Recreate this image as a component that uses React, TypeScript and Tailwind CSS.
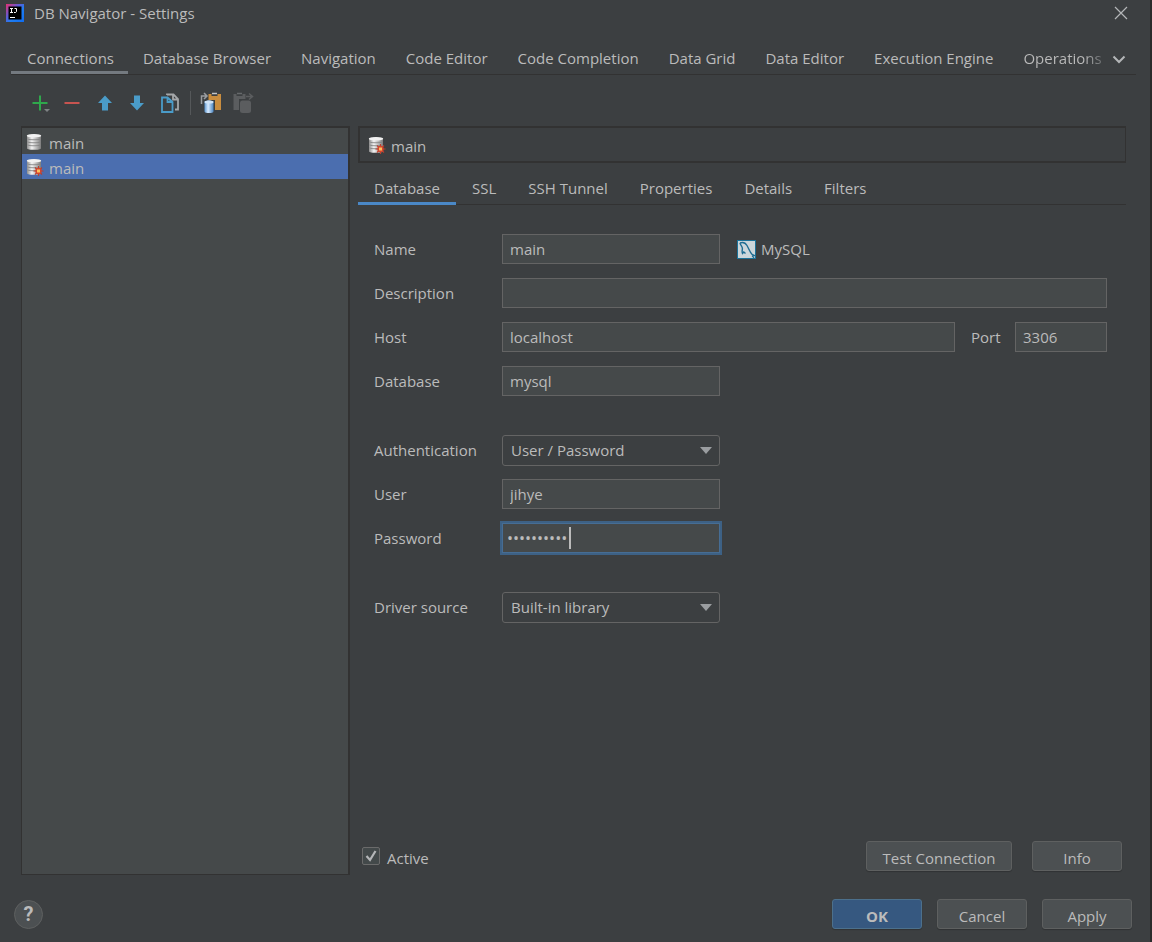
import { useId } from "react";
import type { ReactNode } from "react";

const mainTabs = [
  "Connections",
  "Database Browser",
  "Navigation",
  "Code Editor",
  "Code Completion",
  "Data Grid",
  "Data Editor",
  "Execution Engine",
  "Operations",
];

const detailTabs = ["Database", "SSL", "SSH Tunnel", "Properties", "Details", "Filters"];

function AppLogo() {
  return (
    <svg width="18" height="18" viewBox="0 0 18 18" aria-hidden="true">
      <defs>
        <linearGradient id="logo-edge" x1="0" y1="0" x2="1" y2="1">
          <stop offset="0" stopColor="#e8306f" />
          <stop offset="0.4" stopColor="#5a5fd8" />
          <stop offset="0.6" stopColor="#1f7df0" />
          <stop offset="1" stopColor="#0f6cf2" />
        </linearGradient>
      </defs>
      <rect width="18" height="18" fill="url(#logo-edge)" />
      <rect x="2.500" y="2.500" width="13" height="13" fill="#000" />
      <path
        d="M4 4.500h3M5.500 4.500v4M4 8.500h3M8.500 4.500h2v3l-.8 1H8M4 13.500h5"
        stroke="#fff"
        strokeWidth="1"
        fill="none"
      />
    </svg>
  );
}

function DatabaseIcon({ fresh = false }: { fresh?: boolean }) {
  return (
    <svg width="18" height="18" viewBox="0 0 18 18" aria-hidden="true">
      <defs>
        <linearGradient id="disk" x1="0" y1="0" x2="1" y2="0">
          <stop offset="0" stopColor="#8e8e8e" />
          <stop offset="0.35" stopColor="#f4f4f4" />
          <stop offset="1" stopColor="#7c7c7c" />
        </linearGradient>
      </defs>
      <path d="M1 2.500C1 1 15 1 15 2.500v13c0 1.800-14 1.800-14 0z" fill="url(#disk)" />
      <ellipse cx="8" cy="2.800" rx="7.200" ry="1.700" fill="#f2f2f2" />
      <path
        d="M1.500 6c2 1 11 1 13 0M1.500 9c2 1 11 1 13 0M1.500 12c2 1 11 1 13 0"
        stroke="#858585"
        strokeWidth="0.900"
        fill="none"
      />
      {fresh && (
        <g>
          <path
            d="M12.500 8v10M7.500 13h10M9 9.500l7 7M16 9.500l-7 7"
            stroke="#b8402f"
            strokeWidth="1.100"
            fill="none"
          />
          <circle cx="12.500" cy="13" r="3.200" fill="#d2452f" />
          <rect x="11" y="11.500" width="3" height="3" fill="#ffc05a" />
        </g>
      )}
    </svg>
  );
}

function MySqlIcon() {
  return (
    <svg width="19" height="19" viewBox="0 0 19 19" aria-hidden="true">
      <rect x="0.500" y="0.500" width="18" height="18" fill="#cbd6db" stroke="#1b7299" />
      <path
        d="M3 3c2.500-1 5.500 0 7 2.500 1.800 3 2.800 6.500 5 8.800l2.500 1.200-1.800.8 1.300 1.500M3 3c.2 1.800 1.800 2.800 2.300 4.800.4 2-.8 3.700.2 5.700l1.300-1.500 1.700 1.500"
        fill="none"
        stroke="#1f6d93"
        strokeWidth="1.400"
      />
    </svg>
  );
}

function ToolButton({ label, children }: { label: string; children: ReactNode }) {
  return (
    <button type="button" aria-label={label} className="flex h-6 w-8 items-center justify-center">
      <svg width="22" height="22" viewBox="0 0 22 22" fill="none" aria-hidden="true">
        {children}
      </svg>
    </button>
  );
}

function Toolbar() {
  return (
    <div className="flex items-center pl-[25px]">
      <ToolButton label="Add connection">
        <path d="M10 3.500v15M2.500 11h15" stroke="#2fa84c" strokeWidth="2" />
        <path d="M14 17h6l-3 3z" fill="#7f8385" />
      </ToolButton>
      <ToolButton label="Remove connection">
        <path d="M2.500 11h15" stroke="#c75450" strokeWidth="2" />
      </ToolButton>
      <ToolButton label="Move up">
        <path d="M11 3.500l7 7.500h-4v7.500H8V11H4z" fill="#4a9cc9" />
      </ToolButton>
      <ToolButton label="Move down">
        <path d="M11 18.500l7-7.500h-4V3.500H8V11H4z" fill="#4a9cc9" />
      </ToolButton>
      <ToolButton label="Duplicate">
        <path d="M9 3V2.500h6.500l4.500 4.500V17.500H17M15 2.500v5h5" stroke="#a4a7a9" strokeWidth="1.800" />
        <path d="M4 5.500h5.500L14.500 10v10H4zM9.500 5.500V10h5" stroke="#4a9cc9" strokeWidth="1.800" />
      </ToolButton>
      <span className="mr-1 ml-[5px] h-6 w-px bg-[#55585a]" />
      <ToolButton label="Import from clipboard">
        <defs>
          <linearGradient id="cylinder" x1="0" y1="0" x2="1" y2="0">
            <stop offset="0" stopColor="#5d97d0" />
            <stop offset="0.4" stopColor="#d8ebff" />
            <stop offset="1" stopColor="#4b86c2" />
          </linearGradient>
        </defs>
        <path d="M8.500 2h3v2h6V2h3.500v16h-6V8h-6.500z" fill="#c98d3f" />
        <path d="M12 1.500h5" stroke="#c4c6c8" strokeWidth="1.500" />
        <path d="M1.500 12V4h5M4 1l3 3-3 3" stroke="#9a9da0" strokeWidth="1.500" />
        <path d="M4.500 10c0-2 9-2 9 0v9.500c0 2-9 2-9 0z" fill="url(#cylinder)" />
        <ellipse cx="9" cy="10" rx="4.500" ry="1.500" fill="#cfe3f7" />
      </ToolButton>
      <ToolButton label="Paste">
        <path d="M1.500 2h3v2h6V2h3v5H7v11H1.500z" fill="#5b5d5f" />
        <path d="M5 1.500h5" stroke="#66696b" strokeWidth="1.500" />
        <path d="M14 4.500h6M17 1.500l3.500 3-3.500 3" stroke="#5b5d5f" strokeWidth="1.500" />
        <rect x="8" y="8.500" width="11" height="12.500" rx="2.500" fill="#5b5d5f" />
      </ToolButton>
    </div>
  );
}

const fieldClass =
  "h-[30px] min-w-0 border border-[#646464] bg-[#45494a] px-[7px] text-[15px] text-[#bbbbbb] outline-none";

function Row({ label, children }: { label: string; children: (id: string) => ReactNode }) {
  const id = useId();
  return (
    <div className="flex h-[30px] items-center">
      <label htmlFor={id} className="w-32 shrink-0">
        {label}
      </label>
      {children(id)}
    </div>
  );
}

function Dropdown({ id, value }: { id: string; value: string }) {
  return (
    <div className="relative w-[218px]">
      <select
        id={id}
        defaultValue={value}
        className="h-[31px] w-full appearance-none rounded-[3px] border border-[#646464] bg-[#3c3f41] px-2 text-[15px] text-[#bbbbbb] outline-none"
      >
        <option>{value}</option>
      </select>
      <svg
        width="12"
        height="7"
        viewBox="0 0 12 7"
        className="pointer-events-none absolute top-3 right-2"
        aria-hidden="true"
      >
        <path d="M0 0h12L6 7z" fill="#9a9da0" />
      </svg>
    </div>
  );
}

function PushButton({
  children,
  wide = false,
  primary = false,
}: {
  children: ReactNode;
  wide?: boolean;
  primary?: boolean;
}) {
  return (
    <button
      type="button"
      className={`h-[30px] rounded-[3px] border pt-[3px] leading-[24px] shadow-[0_1px_1px_rgba(0,0,0,0.2)] ${
        wide ? "w-[146px]" : "w-[90px]"
      } ${primary ? "border-[#4c708c] bg-[#365880] font-bold" : "border-[#5e6060] bg-[#4c5052]"}`}
    >
      {children}
    </button>
  );
}

export default function App() {
  return (
    <div className="flex min-h-screen flex-col border-r-2 border-[#2b2b2b] bg-[#3c3f41] font-['Open_Sans','Noto_Sans',sans-serif] text-[15px] leading-[20px] text-[#bbbbbb]">
      <header className="flex h-[26px] items-center pr-[22px] pl-[6px]">
        <AppLogo />
        <h1 className="ml-[10px] flex-1">DB Navigator - Settings</h1>
        <button type="button" aria-label="Close">
          <svg width="14" height="14" viewBox="0 0 14 14" aria-hidden="true">
            <path d="M1 1l12 12M13 1L1 13" stroke="#b4b6b8" strokeWidth="1.200" />
          </svg>
        </button>
      </header>

      <nav className="mt-[18px] mr-[14px] ml-[11px] flex h-[31px] items-stretch">
        <div className="flex min-w-0 flex-1 border-b border-[#323232]" role="tablist">
          {mainTabs.map((tab, i) => (
            <button
              key={tab}
              type="button"
              role="tab"
              aria-selected={i === 0}
              className={`shrink-0 border-b-[3px] whitespace-nowrap ${
                i === 0 ? "border-[#747a80] pr-[14px] pl-4" : "border-transparent"
              } ${
                i === mainTabs.length - 1
                  ? "bg-linear-to-r from-[#bbbbbb] from-80% to-[#6a6d6f] bg-clip-text pl-[15px] text-transparent"
                  : i > 0
                    ? "px-[15px]"
                    : ""
              }`}
            >
              {tab}
            </button>
          ))}
        </div>
        <button
          type="button"
          aria-label="More tabs"
          className="flex w-[33px] items-center border-b border-[#323232] pl-[9px]"
        >
          <svg width="14" height="9" viewBox="0 0 14 9" fill="none" aria-hidden="true">
            <path d="M1.500 1.500L7 7l5.500-5.500" stroke="#b4b6b8" strokeWidth="2" />
          </svg>
        </button>
      </nav>

      <div className="mt-4">
        <Toolbar />
      </div>

      <main className="mt-[11px] mr-[24px] ml-[21px] flex flex-1 gap-2">
        <ul className="w-[329px] shrink-0 border border-t-2 border-r-2 border-[#323232] bg-[#45494a] pt-px">
          <li className="flex h-[25px] items-center gap-[5px] pl-1">
            <DatabaseIcon />
            <span className="pt-[2px]">main</span>
          </li>
          <li className="flex h-[25px] items-center gap-[5px] bg-[#4b6eaf] pl-1">
            <DatabaseIcon fresh />
            <span className="pt-[2px]">main</span>
          </li>
        </ul>

        <section className="flex min-w-0 flex-1 flex-col">
          <div className="flex h-[37px] items-center gap-[5px] border-2 border-r border-[#323232] pl-2">
            <DatabaseIcon fresh />
            <h2 className="pt-[2px]">main</h2>
          </div>

          <div className="mt-[9px] flex h-[33px] border-b border-[#323232]" role="tablist">
            {detailTabs.map((tab, i) => (
              <button
                key={tab}
                type="button"
                role="tab"
                aria-selected={i === 0}
                className={`-mb-px border-b-[3px] px-4 pt-px whitespace-nowrap ${
                  i === 0 ? "border-[#4a88c7]" : "border-transparent"
                }`}
              >
                {tab}
              </button>
            ))}
          </div>

          <form className="mt-[29px] flex flex-col gap-[39px] pr-[19px] pl-4">
            <div className="flex flex-col gap-[14px]">
              <Row label="Name">
                {(id) => (
                  <>
                    <input id={id} defaultValue="main" className={`${fieldClass} w-[218px]`} />
                    <span className="ml-[17px] flex items-center gap-[5px]">
                      <MySqlIcon />
                      MySQL
                    </span>
                  </>
                )}
              </Row>
              <Row label="Description">{(id) => <input id={id} className={`${fieldClass} flex-1`} />}</Row>
              <Row label="Host">
                {(id) => (
                  <>
                    <input id={id} defaultValue="localhost" className={`${fieldClass} flex-1`} />
                    <label htmlFor="port" className="w-[60px] pl-4">
                      Port
                    </label>
                    <input id="port" defaultValue="3306" className={`${fieldClass} w-[92px]`} />
                  </>
                )}
              </Row>
              <Row label="Database">
                {(id) => <input id={id} defaultValue="mysql" className={`${fieldClass} w-[218px]`} />}
              </Row>
            </div>

            <div className="flex flex-col gap-[14px]">
              <Row label="Authentication">{(id) => <Dropdown id={id} value="User / Password" />}</Row>
              <Row label="User">
                {(id) => <input id={id} defaultValue="jihye" className={`${fieldClass} w-[218px]`} />}
              </Row>
              <Row label="Password">
                {(id) => (
                  <div className="relative w-[218px]">
                    <input
                      id={id}
                      type="password"
                      defaultValue="abcdefghij"
                      className="h-[30px] w-full border border-[#466d94] bg-[#45494a] px-1 text-[16px] text-[#bbbbbb] ring-2 ring-[#3d6185] outline-none"
                    />
                    <span className="pointer-events-none absolute top-1 left-[67px] h-[22px] w-0.5 bg-[#bbbbbb]" />
                  </div>
                )}
              </Row>
            </div>

            <Row label="Driver source">{(id) => <Dropdown id={id} value="Built-in library" />}</Row>
          </form>

          <div className="mt-auto mr-1 mb-1 flex items-center gap-5 pl-1">
            <label className="mr-auto flex items-center gap-[7px]">
              <span className="relative flex">
                <input
                  type="checkbox"
                  defaultChecked
                  className="h-[18px] w-[18px] appearance-none rounded-[2px] border border-[#6b6b6b] bg-[#43494a]"
                />
                <svg
                  width="18"
                  height="18"
                  viewBox="0 0 18 18"
                  fill="none"
                  className="pointer-events-none absolute inset-0"
                  aria-hidden="true"
                >
                  <path d="M4.500 9l3.500 4 5.500-9" stroke="#b4b6b8" strokeWidth="2.200" />
                </svg>
              </span>
              <span className="pt-1">Active</span>
            </label>
            <PushButton wide>Test Connection</PushButton>
            <PushButton>Info</PushButton>
          </div>
        </section>
      </main>

      <footer className="mt-6 mr-[18px] mb-[13px] ml-[14px] flex items-center gap-[15px]">
        <button
          type="button"
          aria-label="Help"
          className="mr-auto h-[29px] w-[29px] rounded-full border border-[#5e6060] bg-[#4c5052] font-['Roboto',sans-serif] text-[20px] font-bold"
        >
          ?
        </button>
        <PushButton primary>OK</PushButton>
        <PushButton>Cancel</PushButton>
        <PushButton>Apply</PushButton>
      </footer>
    </div>
  );
}
